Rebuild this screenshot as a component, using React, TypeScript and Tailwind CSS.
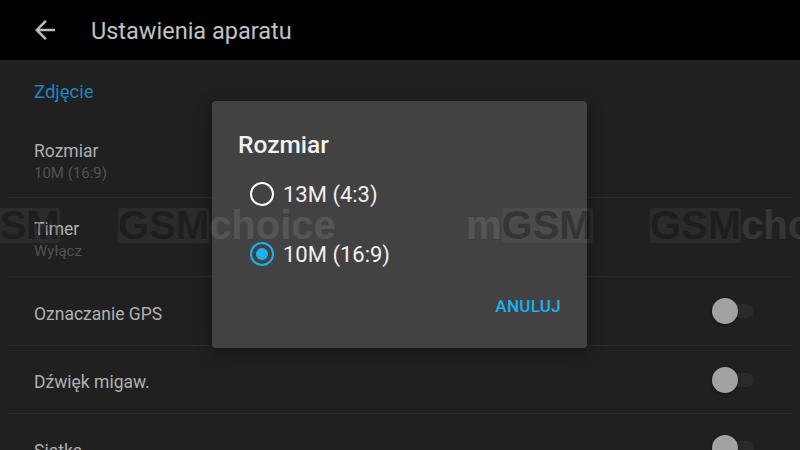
import type { ReactNode } from 'react'

const FONT = "font-['Roboto','Noto_Sans',sans-serif]"

function Watermark({ left, kind }: { left: number; kind: 'choice' | 'm' }) {
  return (
    <div
      className="absolute top-[208px] flex h-[35px] items-center font-['Liberation_Sans',Arial,sans-serif] text-[40px] font-bold leading-[35px]"
      style={{ left }}
    >
      {kind === 'm' && <span className="text-white/10">m</span>}
      <span className="rounded-[3px] bg-white/5 text-black/30">GSM</span>
      {kind === 'choice' && <span className="text-white/10">choice</span>}
    </div>
  )
}

function Toggle() {
  return (
    <div className="relative mr-[38px] h-[26px] w-[42px]">
      <div className="absolute left-[4px] right-0 top-[6px] h-[14px] rounded-full bg-[#2a2a2a]" />
      <div className="absolute left-0 top-0 h-[26px] w-[26px] rounded-full bg-[#a2a2a2] shadow-[0_1px_3px_rgba(0,0,0,0.5)]" />
    </div>
  )
}

function Row({
  title,
  sub,
  h,
  toggle,
  last,
}: {
  title: string
  sub?: string
  h: number
  toggle?: boolean
  last?: boolean
}) {
  return (
    <div
      className={`mx-[8px] flex shrink-0 items-center justify-between ${last ? '' : 'border-b border-[#2c2c2c]'}`}
      style={{ height: h }}
    >
      <div className="flex flex-col pl-[26px] pt-[5px]">
        <span className="text-[17.5px] leading-[22px] text-[#b0b0b0]">{title}</span>
        {sub && <span className="text-[15px] leading-[22px] text-[#525252]">{sub}</span>}
      </div>
      {toggle && <Toggle />}
    </div>
  )
}

function Radio({ checked, children }: { checked?: boolean; children: ReactNode }) {
  return (
    <div className="flex h-[60px] items-center gap-[9px] pl-[38px]">
      <div
        className={`flex h-[24px] w-[24px] items-center justify-center rounded-full border-[2.5px] ${
          checked ? 'border-[#1ab2f5]' : 'border-white'
        }`}
      >
        {checked && <div className="h-[12px] w-[12px] rounded-full bg-[#1ab2f5]" />}
      </div>
      <span className="text-[22px] text-[#f0f0f0]">{children}</span>
    </div>
  )
}

export default function App() {
  return (
    <div className={`relative h-[450px] w-[800px] overflow-hidden bg-[#202020] ${FONT}`}>
      <div className="flex h-full flex-col">
        <header className="flex h-[60px] shrink-0 items-center bg-black">
          <svg width="30" height="30" viewBox="0 0 24 24" className="ml-[30px]" fill="#bdbdbd">
            <path d="M20 11H7.83l5.59-5.59L12 4l-8 8 8 8 1.41-1.41L7.83 13H20v-2z" />
          </svg>
          <h1 className="ml-[31px] pt-[3px] text-[23.5px] text-[#c2c2c2]">Ustawienia aparatu</h1>
        </header>

        <div className="flex h-[61px] shrink-0 items-center pl-[34px] pt-[4px] text-[18.5px] text-[#1b86bf]">
          Zdjęcie
        </div>
        <Row title="Rozmiar" sub="10M (16:9)" h={77} />
        <Row title="Timer" sub="Wyłącz" h={79} />
        <Row title="Oznaczanie GPS" h={69} toggle />
        <Row title="Dźwięk migaw." h={68} toggle />
        <Row title="Siatka" h={68} toggle last />
      </div>

      {/* dialog */}
      <div className="absolute left-[212px] top-[101px] flex h-[247px] w-[375px] flex-col rounded-[4px] bg-[#424242] shadow-[0_4px_16px_rgba(0,0,0,0.4)]">
        <div className="pl-[26px] pt-[29px] text-[24.5px] font-medium leading-[30px] text-[#f2f2f2]">
          Rozmiar
        </div>
        <div className="mt-[4px] flex flex-col">
          <Radio>13M (4:3)</Radio>
          <Radio checked>10M (16:9)</Radio>
        </div>
        <div className="flex justify-end pr-[26px] pt-[10px]">
          <span className="text-[17px] font-medium tracking-[0.3px] text-[#1ab2f5]">ANULUJ</span>
        </div>
      </div>

      {/* watermark */}
      <div className="pointer-events-none absolute inset-0">
        <Watermark left={-67} kind="m" />
        <Watermark left={118} kind="choice" />
        <Watermark left={466} kind="m" />
        <Watermark left={650} kind="choice" />
      </div>
    </div>
  )
}
